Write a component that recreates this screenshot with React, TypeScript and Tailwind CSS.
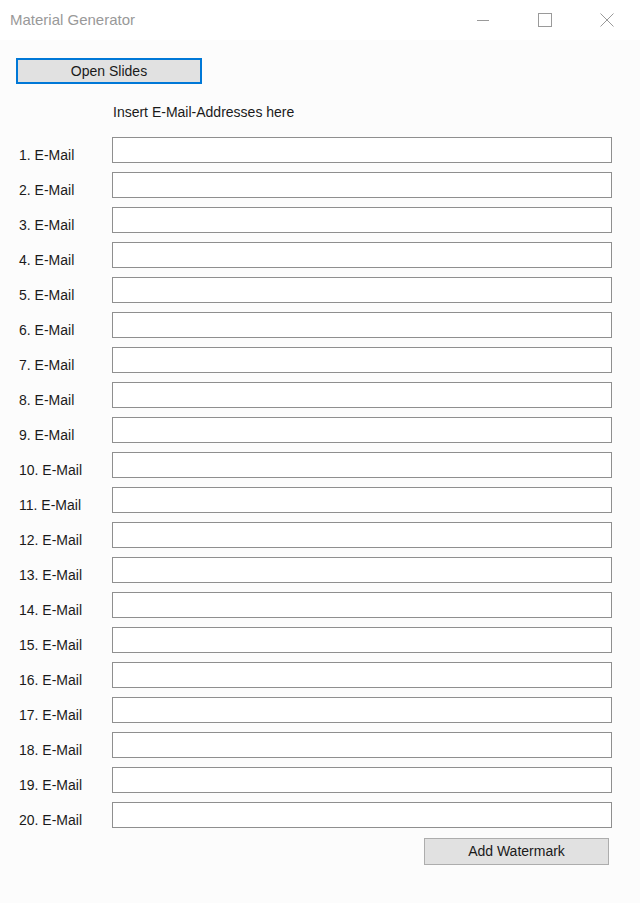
const rows = Array.from({ length: 20 }, (_, i) => i + 1);

function WindowControls() {
  return (
    <div className="flex items-center">
      <div className="flex w-[62px] justify-center">
        <svg width="14" height="14" viewBox="0 0 14 14">
          <line x1="1" y1="7.5" x2="13" y2="7.5" stroke="#9a9a9a" strokeWidth="1" />
        </svg>
      </div>
      <div className="flex w-[62px] justify-center">
        <svg width="14" height="14" viewBox="0 0 14 14">
          <rect x="0.5" y="0.5" width="13" height="13" fill="none" stroke="#9a9a9a" strokeWidth="1" />
        </svg>
      </div>
      <div className="flex w-[62px] justify-center">
        <svg width="14" height="14" viewBox="0 0 14 14">
          <path d="M0.5 0.5 L13.5 13.5 M13.5 0.5 L0.5 13.5" stroke="#9a9a9a" strokeWidth="1" />
        </svg>
      </div>
    </div>
  );
}

export default function App() {
  return (
    <div
      className="flex min-h-[903px] w-[640px] flex-col bg-[#fcfcfc] text-[#1a1a1a]"
      style={{ fontFamily: '"Liberation Sans", Arial, sans-serif' }}
    >
      <div className="flex h-[40px] items-center justify-between bg-white pl-[10px] pr-[2px]">
        <span className="text-[15px] text-[#999999]">Material Generator</span>
        <WindowControls />
      </div>

      <div className="flex flex-col px-[16px]">
        <button className="mt-[18px] h-[26px] w-[186px] border-2 border-[#0078d7] bg-[#e1e1e1] text-[14px]">
          Open Slides
        </button>

        <div className="mt-[20px] h-[16px] pl-[97px] text-[14px] leading-[16px]">
          Insert E-Mail-Addresses here
        </div>

        <div className="mt-[17px] flex flex-col">
          {rows.map((n) => (
            <div key={n} className="flex h-[35px] items-start">
              <span className="mt-[10px] w-[96px] pl-[3px] text-[14px] leading-[16px]">
                {n}. E-Mail
              </span>
              <input
                type="text"
                className="h-[26px] w-[500px] border border-[#8f8f8f] bg-white px-1 text-[14px] outline-none"
              />
            </div>
          ))}
        </div>

        <div className="mt-[1px] flex justify-end pr-[15px]">
          <button className="h-[27px] w-[185px] border border-[#adadad] bg-[#e1e1e1] text-[14px]">
            Add Watermark
          </button>
        </div>
      </div>
    </div>
  );
}
